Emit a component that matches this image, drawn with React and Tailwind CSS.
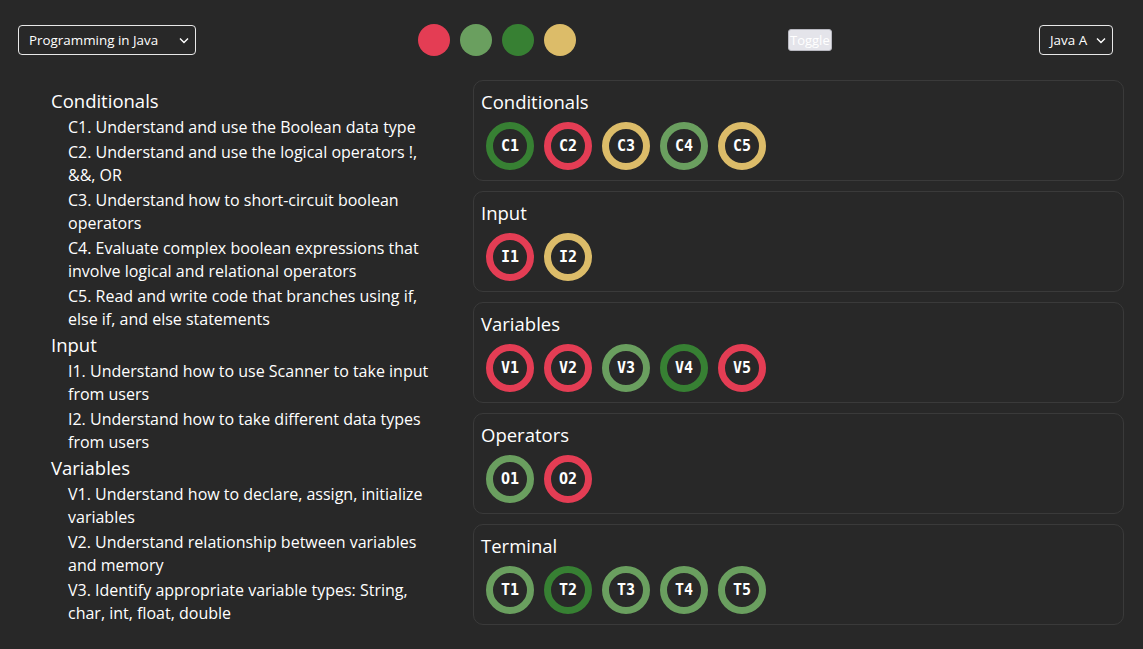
const COLORS = {
  red: 'border-[#e43d54]',
  light: 'border-[#6a9f5f]',
  dark: 'border-[#378033]',
  yellow: 'border-[#dcbc69]',
}

const OUTLINE = [
  {
    title: 'Conditionals',
    items: [
      'C1. Understand and use the Boolean data type',
      'C2. Understand and use the logical operators !, &&, OR',
      'C3. Understand how to short-circuit boolean operators',
      'C4. Evaluate complex boolean expressions that involve logical and relational operators',
      'C5. Read and write code that branches using if, else if, and else statements',
    ],
  },
  {
    title: 'Input',
    items: [
      'I1. Understand how to use Scanner to take input from users',
      'I2. Understand how to take different data types from users',
    ],
  },
  {
    title: 'Variables',
    items: [
      'V1. Understand how to declare, assign, initialize variables',
      'V2. Understand relationship between variables and memory',
      'V3. Identify appropriate variable types: String, char, int, float, double',
    ],
  },
]

const GROUPS = [
  { title: 'Conditionals', badges: [['C1', 'dark'], ['C2', 'red'], ['C3', 'yellow'], ['C4', 'light'], ['C5', 'yellow']] },
  { title: 'Input', badges: [['I1', 'red'], ['I2', 'yellow']] },
  { title: 'Variables', badges: [['V1', 'red'], ['V2', 'red'], ['V3', 'light'], ['V4', 'dark'], ['V5', 'red']] },
  { title: 'Operators', badges: [['O1', 'light'], ['O2', 'red']] },
  { title: 'Terminal', badges: [['T1', 'light'], ['T2', 'dark'], ['T3', 'light'], ['T4', 'light'], ['T5', 'light']] },
]

function Select({ label, className = '' }) {
  return (
    <div className={`flex h-[30px] items-center justify-between rounded-[4px] border border-[#e8e8e8] pl-[10px] pr-[6px] text-[13.4px] text-white ${className}`}>
      <span>{label}</span>
      <svg width="10" height="7" viewBox="0 0 10 7" fill="none" stroke="white" strokeWidth="1.4">
        <path d="M1 1.5 L5 5.5 L9 1.5" />
      </svg>
    </div>
  )
}

function Badge({ code, color }) {
  return (
    <div
      className={`flex h-[48px] w-[48px] items-center justify-center rounded-full border-[7px] ${COLORS[color]} text-[15px] font-bold text-white`}
      style={{ fontFamily: '"DejaVu Sans Mono", monospace' }}
    >
      {code}
    </div>
  )
}

export default function App() {
  return (
    <div className="min-h-[649px] bg-[#282828] font-['Open_Sans',sans-serif] text-white">
      <div className="flex h-[80px] items-center pl-[18px] pr-[30px]">
        <Select label="Programming in Java" className="w-[178px]" />
        <div className="ml-[222px] flex gap-[10px]">
          <span className="h-[32px] w-[32px] rounded-full bg-[#e43d54]" />
          <span className="h-[32px] w-[32px] rounded-full bg-[#6a9f5f]" />
          <span className="h-[32px] w-[32px] rounded-full bg-[#378033]" />
          <span className="h-[32px] w-[32px] rounded-full bg-[#dcbc69]" />
        </div>
        <button className="ml-[212px] h-[22px] rounded-[3px] border border-[#b8b8c0] bg-[#e4e4ea] px-[1px] text-[13px] leading-none text-white">
          Toggle
        </button>
        <Select label="Java A" className="ml-auto w-[74px]" />
      </div>

      <div className="flex gap-[38px] pl-[51px] pr-[19px]">
        <div className="w-[384px] pt-[7px]">
          {OUTLINE.map((section) => (
            <div key={section.title}>
              <h2 className="text-[18.5px] leading-[27px]">{section.title}</h2>
              <ul className="pl-[17px]">
                {section.items.map((item) => (
                  <li key={item} className="pt-[2px] text-[16px] leading-[23px]">{item}</li>
                ))}
              </ul>
            </div>
          ))}
        </div>

        <div className="flex flex-1 flex-col gap-[10px]">
          {GROUPS.map((g) => (
            <div key={g.title} className="h-[101px] rounded-[10px] border border-[#3a3a3a] px-[7px] pt-[8px]">
              <h3 className="text-[18.5px] leading-[26px]">{g.title}</h3>
              <div className="mt-[7px] flex gap-[10px] pl-[5px]">
                {g.badges.map(([code, color]) => (
                  <Badge key={code} code={code} color={color} />
                ))}
              </div>
            </div>
          ))}
        </div>
      </div>
    </div>
  )
}
